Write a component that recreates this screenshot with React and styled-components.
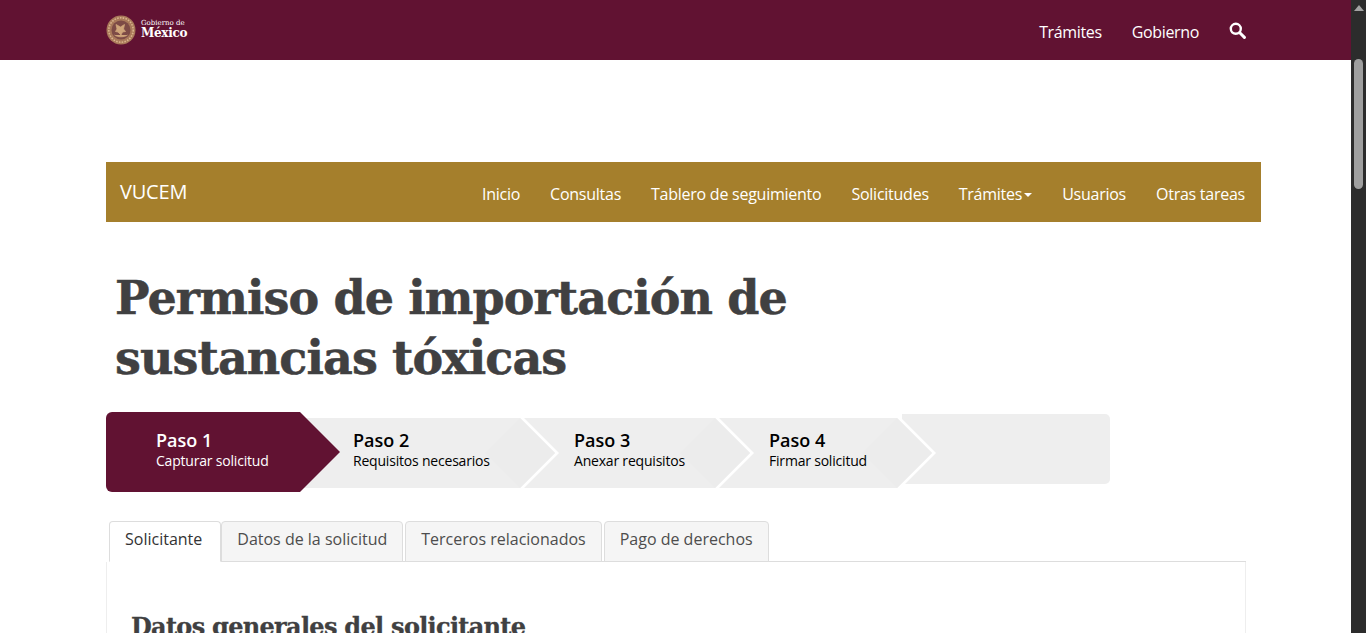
import React from "react";
import styled, { createGlobalStyle } from "styled-components";

const GlobalStyle = createGlobalStyle`
  html, body {
    margin: 0;
    padding: 0;
    height: 633px;
    overflow: hidden;
    background: #fff;
    font-family: "Open Sans", sans-serif;
  }
`;

const Page = styled.div`
  width: 1351px;
`;

const TopBar = styled.header`
  height: 60px;
  background: #611232;
  padding: 0 105px 0 106px;
  display: flex;
  align-items: center;
  justify-content: space-between;
`;

const Logo = styled.div`
  display: flex;
  align-items: center;
  gap: 5px;
  margin-top: -1px;
`;

const LogoText = styled.div`
  font-family: "DejaVu Serif", serif;
  color: #fff;
  display: flex;
  flex-direction: column;
  small { font-size: 7px; line-height: 7px; }
  b { font-size: 12px; line-height: 12px; font-weight: 700; letter-spacing: -0.3px; }
`;

const TopLinks = styled.nav`
  display: flex;
  align-items: center;
  gap: 30px;
  margin-top: 4px;
  a {
    color: #fff;
    font-size: 16px;
    letter-spacing: -0.35px;
  }
  svg { margin: -4px 0 0 0; display: block; }
`;

const Content = styled.main`
  width: 1155px;
  margin: 102px 0 0 106px;
`;

const SubBar = styled.div`
  height: 60px;
  background: #a57f2c;
  padding: 0 16px 0 14px;
  display: flex;
  justify-content: space-between;
  align-items: center;
  color: #fff;
`;

const Brand = styled.span`
  font-size: 20px;
  letter-spacing: -0.2px;
  margin-top: -2px;
`;

const SubLinks = styled.nav`
  display: flex;
  gap: 30px;
  margin-top: 4px;
  font-size: 16px;
  letter-spacing: -0.25px;
  a { display: flex; align-items: center; }
`;

const Caret = styled.i`
  width: 0;
  height: 0;
  margin: 2px 0 0 2px;
  border-top: 4px solid #fff;
  border-left: 4px solid transparent;
  border-right: 4px solid transparent;
`;

const Title = styled.h1`
  margin: 46px 0 0 9px;
  width: 760px;
  font-family: "DejaVu Serif", serif;
  font-weight: 700;
  font-size: 46px;
  line-height: 60px;
  letter-spacing: -0.9px;
  -webkit-text-stroke: 0.5px #404041;
  color: #404041;
`;

const Wizard = styled.div`
  display: flex;
  align-items: center;
  height: 80px;
  margin-top: 24px;
`;

const ARROW = "polygon(0 0, calc(100% - 35px) 0, 100% 50%, calc(100% - 35px) 100%, 0 100%)";

const Step = styled.div`
  position: relative;
  z-index: ${(p) => p.$z};
  flex: none;
  width: ${(p) => p.$w}px;
  height: 70px;
  margin-left: ${(p) => p.$overlap}px;
  margin-top: 2px;
  padding: 11px 0 0 ${(p) => p.$pad}px;
  box-sizing: border-box;
  background: #fff;
  clip-path: ${ARROW};
  color: #000;
  &::before {
    content: "";
    position: absolute;
    inset: 0 4px 0 0;
    background: #eee;
    clip-path: ${ARROW};
    z-index: -1;
  }
  &::after {
    content: "";
    position: absolute;
    inset: 0 4px 0 0;
    background: #ececec;
    clip-path: polygon(calc(100% - 35px) 0, 100% 50%, calc(100% - 35px) 100%, calc(100% - 70px) 50%);
    z-index: -1;
  }
`;

const ActiveStep = styled.div`
  position: relative;
  z-index: 5;
  flex: none;
  width: 234px;
  height: 80px;
  padding: 17px 0 0 50px;
  box-sizing: border-box;
  color: #fff;
  background: #611232;
  border-radius: 6px 0 0 6px;
  clip-path: polygon(0 0, 194px 0, 100% 50%, 194px 100%, 0 100%);
`;

const StepName = styled.div`
  font-size: 18px;
  font-weight: 600;
  line-height: 23px;
`;

const StepText = styled.div`
  font-size: 14px;
  line-height: 17px;
  letter-spacing: -0.2px;
`;

const Filler = styled.div`
  flex: none;
  width: 208px;
  height: 70px;
  margin: -6px 0 0 -34px;
  border-radius: 0 5px 5px 0;
  background: #eee;
`;

const Tabs = styled.div`
  display: flex;
  gap: 2px;
  margin: 29px 0 0 3px;
  width: 1137px;
  border-bottom: 1px solid #ddd;
  height: 40px;
`;

const Tab = styled.a`
  height: 41px;
  box-sizing: border-box;
  padding: 0 15px;
  font-size: 16px;
  line-height: 35px;
  color: ${(p) => (p.$active ? "#333" : "#4d4d4d")};
  background: ${(p) => (p.$active ? "#fff" : "#f5f5f5")};
  border: 1px solid #ddd;
  border-bottom-color: ${(p) => (p.$active ? "#fff" : "#ddd")};
  border-radius: 4px 4px 0 0;
  &:first-child {
    padding-right: 18px;
    margin-right: -2px;
  }
`;

const Panel = styled.section`
  width: 1140px;
  box-sizing: border-box;
  height: 100px;
  border-left: 1px solid #eee;
  border-right: 1px solid #eee;
  padding: 50px 0 0 24px;
`;

const PanelTitle = styled.h2`
  margin: 0;
  font-family: "DejaVu Serif", serif;
  font-weight: 700;
  font-size: 24px;
  line-height: 30px;
  letter-spacing: -0.7px;
  -webkit-text-stroke: 0.3px #404041;
  color: #404041;
`;

const Scrollbar = styled.div`
  position: fixed;
  top: 0;
  right: 0;
  bottom: 0;
  width: 15px;
  background: #2c2c2c;
`;

const ScrollUp = styled.i`
  position: absolute;
  top: 5px;
  left: 3px;
  border-bottom: 6px solid #a3a3a3;
  border-left: 5px solid transparent;
  border-right: 5px solid transparent;
`;

const ScrollThumb = styled.div`
  position: absolute;
  top: 59px;
  left: 3px;
  width: 9px;
  height: 130px;
  border-radius: 5px;
  background: #9f9f9f;
`;

const Seal = () => (
  <svg width="30" height="30" viewBox="0 0 30 30" aria-hidden="true">
    <circle cx="15" cy="15" r="14.5" fill="#a9795a" />
    <circle cx="15" cy="15" r="12.2" fill="none" stroke="#d9b48c" strokeWidth="1.6" strokeDasharray="1.6 1.2" />
    <circle cx="15" cy="15" r="9.5" fill="#7d4b46" />
    <path d="M8.5 20c3 2.4 10 2.4 13 0M10 9.5l4.5 2.5 4-2.5-1 4.5 2 2.5-3 .5-1.5 3-3-3-2.5-.5 1.5-2.5z" fill="#cfa57a" stroke="#cfa57a" strokeWidth="0.8" />
  </svg>
);

const SearchIcon = () => (
  <svg width="17" height="17" viewBox="0 0 17 17" aria-hidden="true">
    <circle cx="6.8" cy="6.8" r="5" fill="none" stroke="#fff" strokeWidth="2.4" />
    <path d="M10.8 10.8l4.6 4.6" stroke="#fff" strokeWidth="3" strokeLinecap="round" />
  </svg>
);

const steps = [
  { name: "Paso 2", text: "Requisitos necesarios", w: 259, overlap: -40, pad: 53 },
  { name: "Paso 3", text: "Anexar requisitos", w: 230, overlap: -35, pad: 50 },
  { name: "Paso 4", text: "Firmar solicitud", w: 217, overlap: -35, pad: 50 },
];

const links = ["Inicio", "Consultas", "Tablero de seguimiento", "Solicitudes"];
const tabs = ["Solicitante", "Datos de la solicitud", "Terceros relacionados", "Pago de derechos"];

export default function App() {
  return (
    <Page>
      <GlobalStyle />
      <TopBar>
        <Logo>
          <Seal />
          <LogoText>
            <small>Gobierno de</small>
            <b>México</b>
          </LogoText>
        </Logo>
        <TopLinks>
          <a>Trámites</a>
          <a>Gobierno</a>
          <SearchIcon />
        </TopLinks>
      </TopBar>
      <Content>
        <SubBar>
          <Brand>VUCEM</Brand>
          <SubLinks>
            {links.map((l) => (
              <a key={l}>{l}</a>
            ))}
            <a>
              Trámites
              <Caret />
            </a>
            <a>Usuarios</a>
            <a>Otras tareas</a>
          </SubLinks>
        </SubBar>
        <Title>Permiso de importación de sustancias tóxicas</Title>
        <Wizard>
          <ActiveStep>
            <StepName>Paso 1</StepName>
            <StepText>Capturar solicitud</StepText>
          </ActiveStep>
          {steps.map((s, i) => (
            <Step key={s.name} $z={4 - i} $w={s.w} $overlap={s.overlap} $pad={s.pad}>
              <StepName>{s.name}</StepName>
              <StepText>{s.text}</StepText>
            </Step>
          ))}
          <Filler />
        </Wizard>
        <Tabs>
          {tabs.map((t, i) => (
            <Tab key={t} $active={i === 0}>
              {t}
            </Tab>
          ))}
        </Tabs>
        <Panel>
          <PanelTitle>Datos generales del solicitante</PanelTitle>
        </Panel>
      </Content>
      <Scrollbar>
        <ScrollUp />
        <ScrollThumb />
      </Scrollbar>
    </Page>
  );
}
